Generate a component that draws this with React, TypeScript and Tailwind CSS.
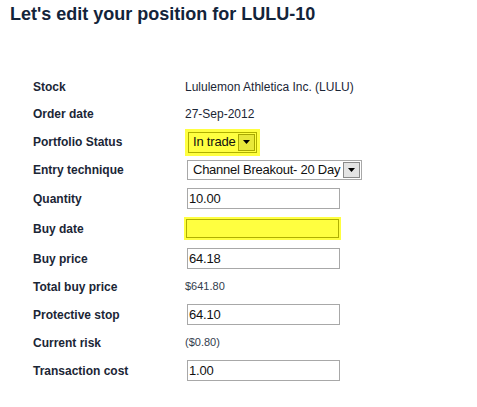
import React from "react";

const Arrow = ({ yellow }: { yellow?: boolean }) => (
  <div
    className={
      "flex h-full w-[17px] shrink-0 items-center justify-center border " +
      (yellow ? "border-[#a8a800] bg-[#e8e83a]" : "border-[#8a8a8a] bg-[#e4e4e4]")
    }
  >
    <svg width="7" height="4" viewBox="0 0 7 4">
      <path d="M0 0h7L3.5 4z" fill="#000" />
    </svg>
  </div>
);

const Row = ({ label, h, children }: { label: string; h: string; children?: React.ReactNode }) => (
  <div className={"flex items-center " + h}>
    <div className="w-[185px] shrink-0 whitespace-nowrap pl-[33px] text-[12px] font-bold text-[#1b2636]">{label}</div>
    <div className="flex items-center whitespace-nowrap">{children}</div>
  </div>
);

const Input = ({ value }: { value: string }) => (
  <div className="ml-[2px] flex h-[21px] w-[153px] items-center border border-[#a8a8a8] bg-white pl-[1px] text-[13px] tracking-[-0.2px] text-[#111]">
    {value}
  </div>
);

export default function App() {
  return (
    <div className="h-[407px] w-[477px] bg-white font-['Liberation_Sans',Arial,sans-serif] text-[#1b2636]">
      <div className="pl-[10px] pt-[4px] text-[18px] font-bold leading-[21px] text-[#13243a]">
        Let's edit your position for LULU-10
      </div>
      <div className="mt-[48px]">
        <Row label="Stock" h="h-[28px]">
          <span className="text-[12px]">Lululemon Athletica Inc. (LULU)</span>
        </Row>
        <Row label="Order date" h="h-[26px]">
          <span className="text-[12px]">27-Sep-2012</span>
        </Row>
        <Row label="Portfolio Status" h="h-[30px]">
          <div className="bg-[#ffff40] p-[3px]">
            <div className="flex h-[21px] w-[69px] items-center border border-[#b0b000] bg-[#ffff40] p-[1px]">
              <span className="flex-1 pl-[3px] text-[13px] tracking-[-0.2px] text-[#111]">In trade</span>
              <Arrow yellow />
            </div>
          </div>
        </Row>
        <Row label="Entry technique" h="h-[26px]">
          <div className="ml-[2px] flex h-[20px] w-[175px] items-center border border-[#a8a8a8] bg-white p-[1px]">
            <span className="flex-1 pl-[4px] text-[13px] tracking-[-0.25px] text-[#111]">Channel Breakout- 20 Day</span>
            <Arrow />
          </div>
        </Row>
        <Row label="Quantity" h="h-[31px]">
          <Input value="10.00" />
        </Row>
        <Row label="Buy date" h="h-[29px]">
          <div className="-ml-[1px] bg-[#ffff40] p-[2px]">
            <div className="h-[19px] w-[153px] border border-[#b0b000] bg-[#ffff40]" />
          </div>
        </Row>
        <Row label="Buy price" h="h-[31px]">
          <Input value="64.18" />
        </Row>
        <Row label="Total buy price" h="h-[25px]">
          <span className="text-[11px] text-[#333d4d]">$641.80</span>
        </Row>
        <Row label="Protective stop" h="h-[31px]">
          <Input value="64.10" />
        </Row>
        <Row label="Current risk" h="h-[25px]">
          <span className="text-[11px] text-[#333d4d]">($0.80)</span>
        </Row>
        <Row label="Transaction cost" h="h-[31px]">
          <Input value="1.00" />
        </Row>
      </div>
    </div>
  );
}
